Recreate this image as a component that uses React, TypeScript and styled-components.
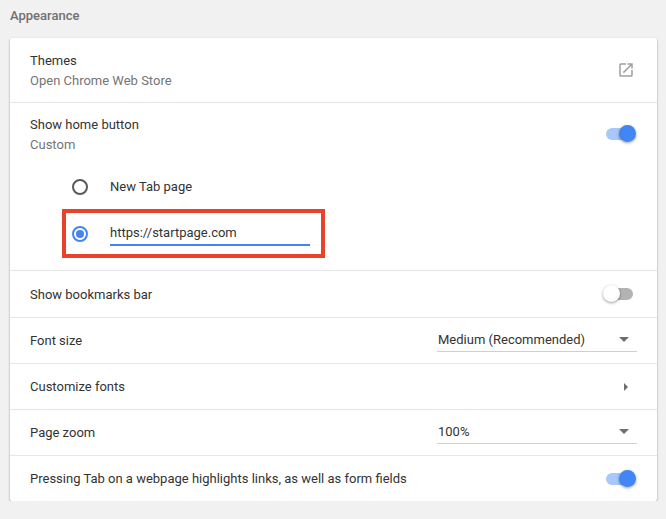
import styled, { createGlobalStyle } from 'styled-components';

const Global = createGlobalStyle`
  body { margin: 0; background: #f1f1f1; font-family: Roboto, "Liberation Sans", sans-serif; }
`;

const Page = styled.div`
  padding: 0 9px 0 10px;
  width: 647px;
`;

const SectionTitle = styled.div`
  font-size: 13px;
  font-weight: 500;
  color: #707070;
  height: 38px;
  line-height: 32px;
`;

const Card = styled.div`
  background: #fff;
  border-radius: 2px;
  box-shadow: 0 1px 2px rgba(0, 0, 0, 0.3), 0 1px 3px rgba(0, 0, 0, 0.1);
`;

const Row = styled.div<{ $h?: number; $first?: boolean }>`
  display: flex;
  align-items: center;
  min-height: ${(p) => p.$h ?? 46}px;
  padding: 0 20px;
  border-top: ${(p) => (p.$first ? 'none' : '1px solid #e6e6e6')};
  box-sizing: border-box;
`;

const Label = styled.div`
  flex: 1;
  font-size: 13px;
  color: #333;
`;

const Secondary = styled.div`
  font-size: 13px;
  color: #757575;
  margin-top: 5px;
`;

const Block = styled.div`
  border-top: 1px solid #e6e6e6;
`;

const HomeHead = styled.div`
  display: flex;
  align-items: flex-start;
  padding: 14px 20px 0;
`;

const RadioList = styled.div`
  padding: 12px 0 12px 52px;
  display: flex;
  flex-direction: column;
`;

const RadioRow = styled.div<{ $boxed?: boolean }>`
  display: flex;
  align-items: center;
  gap: 22px;
  width: 263px;
  height: ${(p) => (p.$boxed ? 49 : 45)}px;
  box-sizing: border-box;
  padding-left: ${(p) => (p.$boxed ? 6 : 10)}px;
  border: ${(p) => (p.$boxed ? '4px solid #e8412c' : 'none')};
`;

const Radio = styled.span<{ $on?: boolean }>`
  width: 16px;
  height: 16px;
  box-sizing: border-box;
  border-radius: 50%;
  border: 2px solid ${(p) => (p.$on ? '#4285f4' : '#5a5a5a')};
  display: flex;
  align-items: center;
  justify-content: center;
  &::after {
    content: '';
    display: ${(p) => (p.$on ? 'block' : 'none')};
    width: 8px;
    height: 8px;
    border-radius: 50%;
    background: #4285f4;
  }
`;

const RadioText = styled.span`
  font-size: 13px;
  color: #333;
`;

const UrlInput = styled.div`
  width: 200px;
  font-size: 13px;
  color: #333;
  padding-bottom: 4px;
  border-bottom: 2px solid #4285f4;
  margin-top: 4px;
`;

const Toggle = styled.span<{ $on?: boolean; $top?: number }>`
  display: block;
  position: relative;
  width: 27px;
  height: 12px;
  border-radius: 6px;
  margin-right: 4px;
  margin-top: ${(p) => p.$top ?? 0}px;
  background: ${(p) => (p.$on ? '#a8c7fa' : '#b3b3b3')};
  &::after {
    content: '';
    position: absolute;
    top: -3px;
    left: ${(p) => (p.$on ? 13 : -3)}px;
    width: 17px;
    height: 17px;
    border-radius: 50%;
    background: ${(p) => (p.$on ? '#4285f4' : '#fff')};
    box-shadow: 0 1px 3px rgba(0, 0, 0, 0.4);
  }
`;

const Select = styled.div`
  width: 200px;
  display: flex;
  align-items: center;
  justify-content: space-between;
  font-size: 13px;
  color: #333;
  padding: 0 2px 4px 1px;
  border-bottom: 1px solid #cfcfcf;
  margin-top: 2px;
  box-sizing: border-box;
`;

const Caret = styled.span`
  width: 0;
  height: 0;
  border-left: 5px solid transparent;
  border-right: 5px solid transparent;
  border-top: 5px solid #6e6e6e;
  margin-right: 6px;
`;

const Arrow = styled.span`
  width: 0;
  height: 0;
  border-top: 4px solid transparent;
  border-bottom: 4px solid transparent;
  border-left: 4px solid #6e6e6e;
  margin-right: 9px;
`;

const ExtIcon = () => (
  <svg width="18" height="18" viewBox="0 0 24 24" style={{ marginRight: 2 }}>
    <path
      fill="#a0a0a0"
      d="M19 19H5V5h7V3H5a2 2 0 0 0-2 2v14a2 2 0 0 0 2 2h14c1.1 0 2-.9 2-2v-7h-2v7zM14 3v2h3.59l-9.83 9.83 1.41 1.41L19 6.41V10h2V3h-7z"
    />
  </svg>
);

export default function App() {
  return (
    <Page>
      <Global />
      <SectionTitle>Appearance</SectionTitle>
      <Card>
        <Row $h={64} $first>
          <Label>
            Themes
            <Secondary>Open Chrome Web Store</Secondary>
          </Label>
          <ExtIcon />
        </Row>
        <Block>
          <HomeHead>
            <Label>
              Show home button
              <Secondary>Custom</Secondary>
            </Label>
            <Toggle $on $top={11} />
          </HomeHead>
          <RadioList>
            <RadioRow>
              <Radio />
              <RadioText>New Tab page</RadioText>
            </RadioRow>
            <RadioRow $boxed>
              <Radio $on />
              <UrlInput>https://startpage.com</UrlInput>
            </RadioRow>
          </RadioList>
        </Block>
        <Row $h={47}>
          <Label>Show bookmarks bar</Label>
          <Toggle />
        </Row>
        <Row>
          <Label>Font size</Label>
          <Select>
            Medium (Recommended)
            <Caret />
          </Select>
        </Row>
        <Row>
          <Label>Customize fonts</Label>
          <Arrow />
        </Row>
        <Row>
          <Label>Page zoom</Label>
          <Select>
            100%
            <Caret />
          </Select>
        </Row>
        <Row>
          <Label>Pressing Tab on a webpage highlights links, as well as form fields</Label>
          <Toggle $on />
        </Row>
      </Card>
    </Page>
  );
}
